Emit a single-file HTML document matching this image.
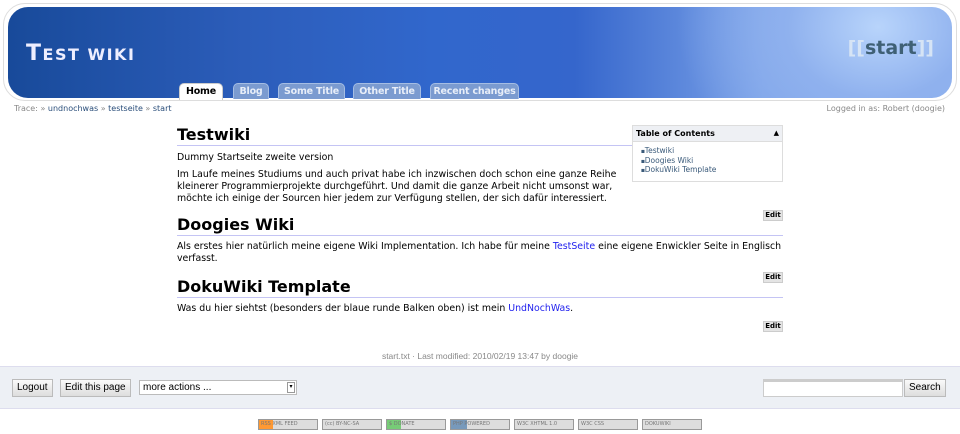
<!DOCTYPE html>
<html><head><meta charset="utf-8"><style>
*{margin:0;padding:0;box-sizing:border-box}
body{width:960px;height:434px;background:#fff;font-family:"DejaVu Sans","Liberation Sans",sans-serif;color:#000;position:relative;overflow:hidden}
.abs{position:absolute}
.outer{left:3px;top:3px;width:954px;height:98px;border:1px solid #ddd;border-radius:22px}
.hdr{left:8px;top:7px;width:944px;height:91px;border-radius:20px;overflow:hidden;
background:radial-gradient(ellipse 200px 160px at 870px 20px,#b8d4fb 0%,#8fb1ee 45%,rgba(100,140,225,0) 100%),linear-gradient(90deg,#184a9a 0%,#2c5dba 25%,#3167cc 45%,#3566cc 60%,#7ba2e8 80%,#8db0ee 100%)}
.title{left:26px;top:41px;color:#eef;font-family:"DejaVu Sans",sans-serif;font-weight:bold;font-size:22px;letter-spacing:1.5px}
.title small{font-size:16px}
.start{right:26px;top:37px;font-size:19px;font-weight:bold;color:#3f6075}
.start b{color:#d6e4f5}
.tab{top:83px;height:16px;border-radius:5px 5px 0 0;background:#7b9bd0;border:1px solid #a5bde3;border-bottom:none;color:#e8eef8;font-size:9.5px;font-weight:bold;text-align:center;line-height:16px;white-space:nowrap;overflow:hidden;letter-spacing:-0.2px}
.tab.on{background:#fff;color:#000;height:17px;border-color:#ccc}
.sm{font-size:8px;color:#888}
.sm a{color:#2a4e7a;text-decoration:none}
h1{position:absolute;left:177px;width:606px;font-size:16px;font-weight:bold;border-bottom:1px solid #c4c4f4;line-height:20px}
p{position:absolute;left:177px;font-size:9.4px;line-height:12px;width:620px}
a.l{color:#2222ee;text-decoration:none}
.edit{position:absolute;left:763px;width:20px;height:11px;background:#e4e4e4;border:1px solid #ccc;font-size:7px;font-weight:bold;text-align:center;line-height:9px}
.toc{left:632px;top:125px;width:151px;height:57px;border:1px solid #ddd}
.toch{height:16px;background:#eef0f4;border-bottom:1px solid #ddd;font-size:8px;font-weight:bold;padding:3px 3px}
.toc ul{list-style:none;padding:4px 8px;font-size:7.5px;line-height:9px;color:#3a5a7a}
.toc li span{font-size:4px;vertical-align:middle}
.bar{left:0;top:366px;width:960px;height:43px;background:#edf0f5;border-top:1px solid #dde;border-bottom:1px solid #dde}
.btn{top:379px;height:18px;background:linear-gradient(#fafafa,#ddd);border:1px solid #bbb;font-size:10px;line-height:16px;padding:0 4px;font-family:"Liberation Sans",sans-serif}
.badge{top:419px;height:11px;border:1px solid #999;background:#ddd;font-size:5px;color:#777;line-height:9px;padding-left:2px}
</style></head><body>
<div class="abs outer"></div>
<div class="abs hdr"></div>
<div class="abs title">T<small>EST WIKI</small></div>
<div class="abs start"><b>[[</b>start<b>]]</b></div>
<div class="abs tab on" style="left:179px;width:44px">Home</div>
<div class="abs tab" style="left:233px;width:36px">Blog</div>
<div class="abs tab" style="left:278px;width:67px">Some Title</div>
<div class="abs tab" style="left:353px;width:68px">Other Title</div>
<div class="abs tab" style="left:430px;width:89px">Recent changes</div>
<div class="abs sm" style="left:14px;top:104px">Trace: » <a>undnochwas</a> » <a>testseite</a> » <a>start</a></div>
<div class="abs sm" style="right:15px;top:104px">Logged in as: Robert (doogie)</div>
<div class="abs toc"><div class="toch">Table of Contents<span style="float:right;font-size:7px">▲</span></div>
<ul><li><span>■</span>Testwiki</li><li><span>■</span>Doogies Wiki</li><li><span>■</span>DokuWiki Template</li></ul></div>
<h1 style="top:125px;width:455px">Testwiki</h1>
<p style="top:152px">Dummy Startseite zweite version</p>
<p style="top:169px;width:450px">Im Laufe meines Studiums und auch privat habe ich inzwischen doch schon eine ganze Reihe kleinerer Programmierprojekte durchgeführt. Und damit die ganze Arbeit nicht umsonst war, möchte ich einige der Sourcen hier jedem zur Verfügung stellen, der sich dafür interessiert.</p>
<div class="edit" style="top:210px">Edit</div>
<h1 style="top:215px">Doogies Wiki</h1>
<p style="top:241px;width:610px">Als erstes hier natürlich meine eigene Wiki Implementation. Ich habe für meine <a class="l">TestSeite</a> eine eigene Enwickler Seite in Englisch verfasst.</p>
<div class="edit" style="top:272px">Edit</div>
<h1 style="top:277px">DokuWiki Template</h1>
<p style="top:303px">Was du hier siehtst (besonders der blaue runde Balken oben) ist mein <a class="l">UndNochWas</a>.</p>
<div class="edit" style="top:321px">Edit</div>
<div class="abs sm" style="left:0;width:960px;text-align:center;top:351px;font-family:'Liberation Sans',sans-serif;font-size:8.5px">start.txt · Last modified: 2010/02/19 13:47 by doogie</div>
<div class="abs bar"></div>
<div class="abs btn" style="left:12px">Logout</div>
<div class="abs btn" style="left:60px">Edit this page</div>
<div class="abs" style="left:139px;top:380px;width:158px;height:15px;background:#fff;border:1px solid #bbb;font-size:10px;line-height:13px;padding-left:3px;font-family:'Liberation Sans',sans-serif">more actions ...<span style="position:absolute;right:1px;top:1px;width:8px;height:11px;border:1px solid #999;font-size:6px;line-height:9px;text-align:center">▾</span></div>
<div class="abs" style="left:763px;top:379px;width:140px;height:18px;background:#fff;border:1px solid #ccc;border-top:3px solid #ccc"></div>
<div class="abs btn" style="left:904px">Search</div>
<div class="abs badge" style="left:258px;width:60px;background:linear-gradient(90deg,#f93 0 14px,#ddd 14px)">RSS XML FEED</div>
<div class="abs badge" style="left:322px;width:60px">(cc) BY-NC-SA</div>
<div class="abs badge" style="left:386px;width:60px;background:linear-gradient(90deg,#7c7 0 14px,#ddd 14px)">$ DONATE</div>
<div class="abs badge" style="left:450px;width:60px;background:linear-gradient(90deg,#79b 0 16px,#ddd 16px)">PHP POWERED</div>
<div class="abs badge" style="left:514px;width:60px">W3C XHTML 1.0</div>
<div class="abs badge" style="left:578px;width:60px">W3C CSS</div>
<div class="abs badge" style="left:642px;width:60px">DOKUWIKI</div>
</body></html>
